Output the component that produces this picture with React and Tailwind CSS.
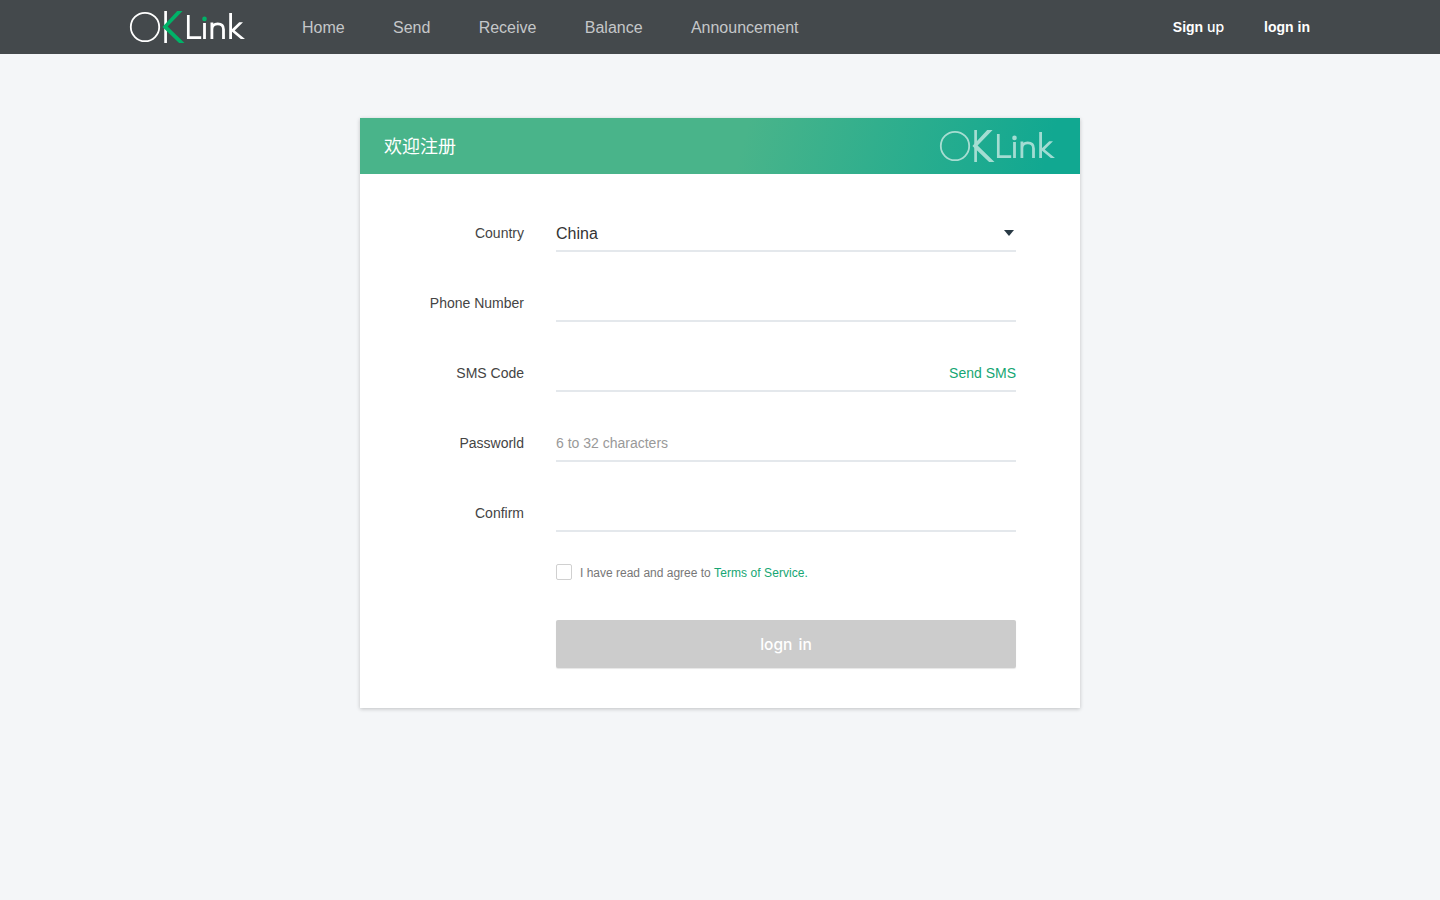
const navItems = ['Home', 'Send', 'Receive', 'Balance', 'Announcement'];

function Logo({ accent }) {
  return (
    <svg width="118" height="34" viewBox="0 0 118 34" fill="none" stroke="#fff" className="block">
      <circle cx="16" cy="17" r="14.2" strokeWidth="1.8" />
      <path d="M36.6 1v32" strokeWidth="2.7" />
      <path d="M48.2 1h5.4L38.6 16.4 55.5 33h-5.4L33.4 17z" fill={accent} stroke="none" />
      <path d="M59.3 5v22.7H72.2" strokeWidth="2.7" />
      <path d="M75.5 13v16" strokeWidth="2.8" />
      <circle cx="75.5" cy="8.9" r="2.3" fill={accent} stroke="none" />
      <path d="M82.9 12.6V29M82.9 19.2c0-3.6 2.4-5.3 5.8-5.3s5.8 1.7 5.8 5.5V29" strokeWidth="2.8" />
      <path d="M101.6 3v26" strokeWidth="2.8" />
      <path d="M110.2 12.2h3.8l-8.3 8.2 10.3 8.6h-4.2l-10.2-8.5z" fill="#fff" stroke="none" />
    </svg>
  );
}

function Row({ label, children }) {
  return (
    <div className="mb-[34px] flex h-9 items-stretch">
      <label className="w-[164px] shrink-0 text-right text-sm leading-[35px] text-[#444]">{label}</label>
      <div className="ml-8 flex w-[460px] items-center justify-between border-b-2 border-[#e4e8ec]">
        {children}
      </div>
    </div>
  );
}

export default function App() {
  return (
    <div className="min-h-screen bg-[#f4f6f8] font-['Liberation_Sans','Noto_Sans_CJK_SC',sans-serif]">
      <header className="flex h-[54px] items-center bg-[#44494c] pr-[130px] pl-[129px]">
        <Logo accent="#00b268" />
        <nav className="ml-[55px] flex gap-[48.3px] pt-0.5 text-base text-[#c5c7c9]">
          {navItems.map((item) => (
            <a key={item} href="#">{item}</a>
          ))}
        </nav>
        <div className="ml-auto flex gap-10 text-sm font-bold text-white">
          <a href="#">Sign <span className="font-['Inter',sans-serif] text-sm font-medium">up</span></a>
          <a href="#">logn in</a>
        </div>
      </header>

      <main className="mx-auto mt-16 h-[590px] w-[720px] bg-white shadow-[0_1px_4px_rgba(0,0,0,0.22)]">
        <div className="flex h-14 items-center justify-between bg-[linear-gradient(105deg,#49b48a_0%,#49b48a_53%,#11a891_95%)] pr-[23px] pl-6">
          <h1 className="pt-0.5 text-lg font-normal text-white">欢迎注册</h1>
          <div className="opacity-60">
            <Logo accent="#fff" />
          </div>
        </div>

        <form className="pt-[42px]">
          <Row label="Country">
            <span className="pt-0.5 text-base text-[#333]">China</span>
            <svg width="10" height="6" viewBox="0 0 10 6" className="mr-0.5">
              <path d="M0 0h10L5 6z" fill="#293a45" />
            </svg>
          </Row>
          <Row label="Phone Number" />
          <Row label="SMS Code">
            <a href="#" className="ml-auto text-sm text-[#16a673]">Send SMS</a>
          </Row>
          <Row label="Passworld">
            <span className="text-sm text-[#999]">6 to 32 characters</span>
          </Row>
          <Row label="Confirm" />
          <div className="-mt-0.5 ml-[196px] flex h-4 items-center gap-2 text-xs text-[#777]">
            <span className="size-4 rounded-xs border border-[#d0d0d0]" />
            <span className="pt-0.5">I have read and agree to <a href="#" className="tracking-[0.07px] text-[#16a673]">Terms of Service.</a></span>
          </div>
          <button type="button" className="mt-10 ml-[196px] h-12 w-[460px] rounded-xs bg-[#ccc] pt-0.5 font-['Inter',sans-serif] text-[15.5px] font-medium [word-spacing:2px] text-white shadow-[0_1px_1px_rgba(0,0,0,0.1)]">
            logn in
          </button>
        </form>
      </main>
    </div>
  );
}
